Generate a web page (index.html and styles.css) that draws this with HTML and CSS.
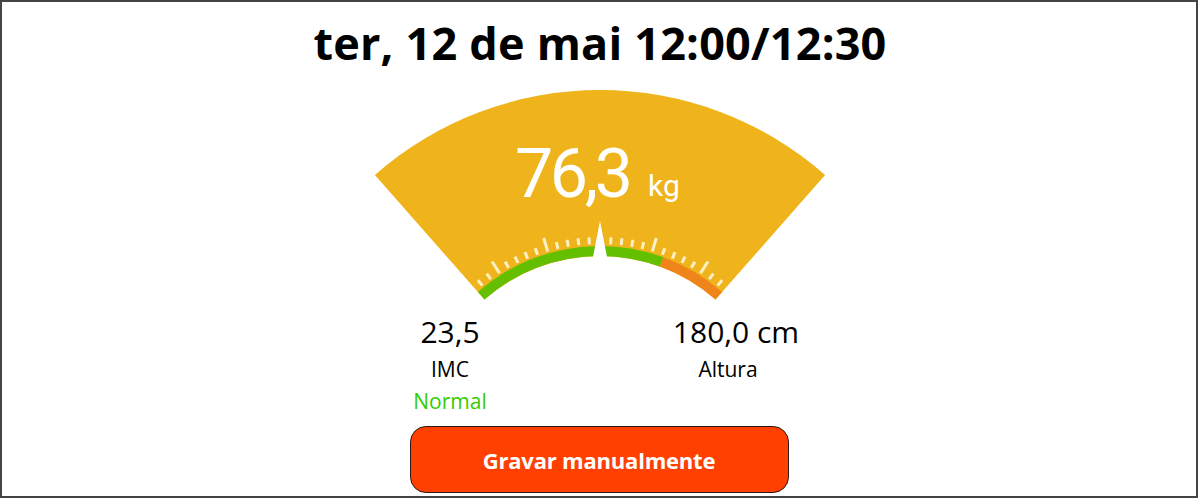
FILE: index.html
```html
<!DOCTYPE html>
<html lang="pt">
<head>
<meta charset="utf-8">
<title>Peso</title>
<link rel="stylesheet" href="styles.css">
</head>
<body>
<div class="frame">
  <h1 class="title">ter, 12 de mai 12:00/12:30</h1>
  <svg class="gauge" width="460" height="220" viewBox="370 85 460 220" xmlns="http://www.w3.org/2000/svg">
    <path class="sector" d="M 374.9 174.9 A 341 341 0 0 1 825.1 174.9 L 715.5 299.6 A 175 175 0 0 0 484.5 299.6 Z"/>
    <path class="band-green" d="M 481.2 295.8 A 180 180 0 0 1 661.6 261.9"/>
    <path class="band-orange" d="M 661.6 261.9 A 180 180 0 0 1 718.8 295.8"/>
    <g class="ticks">
      <line x1="600" y1="244" x2="600" y2="237" transform="rotate(-39 600 431)"/>
      <line x1="600" y1="244" x2="600" y2="237" transform="rotate(-35.75 600 431)"/>
      <line x1="600" y1="244" x2="600" y2="230" transform="rotate(-32.5 600 431)"/>
      <line x1="600" y1="244" x2="600" y2="237" transform="rotate(-29.25 600 431)"/>
      <line x1="600" y1="244" x2="600" y2="237" transform="rotate(-26 600 431)"/>
      <line x1="600" y1="244" x2="600" y2="237" transform="rotate(-22.75 600 431)"/>
      <line x1="600" y1="244" x2="600" y2="237" transform="rotate(-19.5 600 431)"/>
      <line x1="600" y1="244" x2="600" y2="230" transform="rotate(-16.25 600 431)"/>
      <line x1="600" y1="244" x2="600" y2="237" transform="rotate(-13 600 431)"/>
      <line x1="600" y1="244" x2="600" y2="237" transform="rotate(-9.75 600 431)"/>
      <line x1="600" y1="244" x2="600" y2="237" transform="rotate(-6.5 600 431)"/>
      <line x1="600" y1="244" x2="600" y2="237" transform="rotate(-3.25 600 431)"/>
      <line x1="600" y1="244" x2="600" y2="237" transform="rotate(3.25 600 431)"/>
      <line x1="600" y1="244" x2="600" y2="237" transform="rotate(6.5 600 431)"/>
      <line x1="600" y1="244" x2="600" y2="237" transform="rotate(9.75 600 431)"/>
      <line x1="600" y1="244" x2="600" y2="237" transform="rotate(13 600 431)"/>
      <line x1="600" y1="244" x2="600" y2="230" transform="rotate(16.25 600 431)"/>
      <line x1="600" y1="244" x2="600" y2="237" transform="rotate(19.5 600 431)"/>
      <line x1="600" y1="244" x2="600" y2="237" transform="rotate(22.75 600 431)"/>
      <line x1="600" y1="244" x2="600" y2="237" transform="rotate(26 600 431)"/>
      <line x1="600" y1="244" x2="600" y2="237" transform="rotate(29.25 600 431)"/>
      <line x1="600" y1="244" x2="600" y2="230" transform="rotate(32.5 600 431)"/>
      <line x1="600" y1="244" x2="600" y2="237" transform="rotate(35.75 600 431)"/>
      <line x1="600" y1="244" x2="600" y2="237" transform="rotate(39 600 431)"/>
    </g>
    <polygon class="needle" points="600,221 592,262 608,262"/>
    <text class="weight" x="515" y="197" textLength="118" lengthAdjust="spacing">76,3</text>
    <text class="unit" x="648" y="196">kg</text>
  </svg>
  <div class="stats">
    <div class="stat">
      <div class="stat-value">23,5</div>
      <div class="stat-label">IMC</div>
      <div class="stat-status">Normal</div>
    </div>
    <div class="stat">
      <div class="stat-value stat-value-shift">180,0 cm</div>
      <div class="stat-label">Altura</div>
    </div>
  </div>
  <button class="record-btn" type="button">Gravar manualmente</button>
</div>
</body>
</html>
```

FILE: styles.css
```css
html, body {
  margin: 0;
  padding: 0;
  background: #ffffff;
}

.frame {
  box-sizing: border-box;
  width: 1198px;
  height: 498px;
  border: 2px solid #444444;
  display: flex;
  flex-direction: column;
  align-items: center;
  padding-top: 17px;
  font-family: "Open Sans", "Liberation Sans", sans-serif;
  color: #000000;
}

.title {
  margin: 0;
  font-size: 45px;
  line-height: 48px;
  font-weight: 700;
  letter-spacing: 0.2px;
  transform: translateX(1px);
}

.gauge {
  display: block;
  margin-top: 18px;
  transform: translateX(1px);
}

.sector {
  fill: #efb41b;
}

.band-green {
  fill: none;
  stroke: #63bf00;
  stroke-width: 10;
}

.band-orange {
  fill: none;
  stroke: #ef841b;
  stroke-width: 10;
}

.ticks line {
  stroke: #fdf0c4;
  stroke-width: 3;
}

.needle {
  fill: #ffffff;
}

.weight {
  fill: #ffffff;
  font-family: Roboto, "Noto Sans", sans-serif;
  font-size: 68px;
  font-weight: 400;
}

.unit {
  fill: #ffffff;
  font-family: Roboto, "Noto Sans", sans-serif;
  font-size: 30px;
  font-weight: 400;
}

.stats {
  display: flex;
  gap: 78px;
  padding-right: 20px;
  margin-top: 6px;
}

.stat {
  width: 200px;
  display: flex;
  flex-direction: column;
  align-items: center;
  text-align: center;
}

.stat-value {
  font-size: 30px;
  line-height: 42px;
}

.stat-value-shift {
  padding-left: 16px;
}

.stat-label,
.stat-status {
  font-size: 21px;
  line-height: 32px;
}

.stat-status {
  color: #33cc00;
}

.stats + .record-btn {
  margin-top: auto;
}

.record-btn {
  box-sizing: border-box;
  width: 379px;
  height: 67px;
  margin-bottom: 3px;
  border: 1px solid #2a1a14;
  border-radius: 16px;
  background: #ff4000;
  color: #ffffff;
  font-family: "Open Sans", "Liberation Sans", sans-serif;
  font-size: 22px;
  font-weight: 700;
  letter-spacing: -0.2px;
  cursor: pointer;
}
```
